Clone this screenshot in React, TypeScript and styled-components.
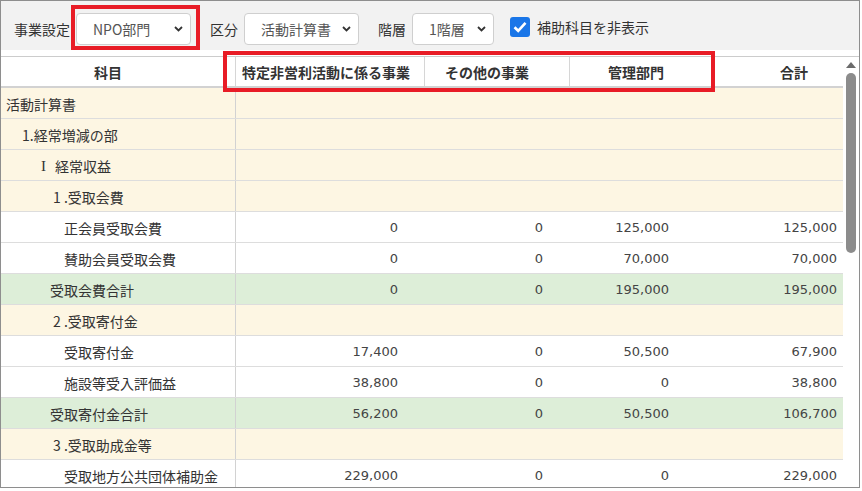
import styled, { createGlobalStyle } from "styled-components";

const GlobalStyle = createGlobalStyle`
  html, body {
    margin: 0;
    padding: 0;
    background: #ffffff;
  }
  body {
    font-family: "Noto Sans CJK JP", "Noto Sans", sans-serif;
    color: #333333;
  }
`;

type Kind = "group" | "item" | "total";

interface TRow {
  label: string;
  indent: number;
  kind: Kind;
  numeral?: string;
  values?: string[];
}

const rows: TRow[] = [
  { label: "活動計算書", indent: 5, kind: "group" },
  { label: "1.経常増減の部", indent: 21, kind: "group" },
  { label: "経常収益", numeral: "I", indent: 35, kind: "group" },
  { label: "1 .受取会費", indent: 52, kind: "group" },
  { label: "正会員受取会費", indent: 63, kind: "item", values: ["0", "0", "125,000", "125,000"] },
  { label: "賛助会員受取会費", indent: 63, kind: "item", values: ["0", "0", "70,000", "70,000"] },
  { label: "受取会費合計", indent: 49, kind: "total", values: ["0", "0", "195,000", "195,000"] },
  { label: "2 .受取寄付金", indent: 52, kind: "group" },
  { label: "受取寄付金", indent: 63, kind: "item", values: ["17,400", "0", "50,500", "67,900"] },
  { label: "施設等受入評価益", indent: 63, kind: "item", values: ["38,800", "0", "0", "38,800"] },
  { label: "受取寄付金合計", indent: 49, kind: "total", values: ["56,200", "0", "50,500", "106,700"] },
  { label: "3 .受取助成金等", indent: 52, kind: "group" },
  { label: "受取地方公共団体補助金", indent: 63, kind: "item", values: ["229,000", "0", "0", "229,000"] },
];

const headers = [
  { label: "科目", pl: 6, pr: 26 },
  { label: "特定非営利活動に係る事業", pl: 6, pr: 26 },
  { label: "その他の事業", pl: 6, pr: 26 },
  { label: "管理部門", pl: 6, pr: 16 },
  { label: "合計", pl: 38, pr: 6 },
];

const rowColors: Record<Kind, string> = {
  group: "#fdf6e3",
  item: "#ffffff",
  total: "#ddeed8",
};

function Chevron() {
  return (
    <svg width="9" height="6" viewBox="0 0 9 6">
      <path d="M1 1 L4.5 4.5 L8 1" fill="none" stroke="#333" strokeWidth="1.8" />
    </svg>
  );
}

function Select({ value, width }: { value: string; width: number }) {
  return (
    <SelectBox $width={width}>
      <span>{value}</span>
      <Chevron />
    </SelectBox>
  );
}

export default function App() {
  return (
    <>
      <GlobalStyle />
      <Frame>
        <Toolbar>
          <Field>
            <Label>事業設定</Label>
            <Select value="NPO部門" width={115} />
          </Field>
          <Field>
            <Label>区分</Label>
            <Select value="活動計算書" width={115} />
          </Field>
          <Field>
            <Label>階層</Label>
            <Select value="1階層" width={82} />
          </Field>
          <CheckField>
            <CheckBox>
              <svg width="14" height="12" viewBox="0 0 14 12">
                <path d="M1.5 6.2 L5.2 9.8 L12.5 1.8" fill="none" stroke="#fff" strokeWidth="2.6" />
              </svg>
            </CheckBox>
            <Label>補助科目を非表示</Label>
          </CheckField>
        </Toolbar>

        <TableArea>
          <Table>
            <HeaderRow>
              {headers.map((h) => (
                <HeaderCell key={h.label} $pl={h.pl} $pr={h.pr}>
                  {h.label}
                </HeaderCell>
              ))}
            </HeaderRow>
            {rows.map((r) => (
              <BodyRow key={r.label} $bg={rowColors[r.kind]}>
                <LabelCell $indent={r.indent}>
                  {r.numeral && <Numeral>{r.numeral}</Numeral>}
                  {r.label}
                </LabelCell>
                {[0, 1, 2, 3].map((i) => (
                  <NumCell key={i}>{r.values ? r.values[i] : ""}</NumCell>
                ))}
              </BodyRow>
            ))}
          </Table>
          <Scrollbar>
            <ArrowUp />
            <Thumb />
          </Scrollbar>
        </TableArea>

        <Highlight $left={70} $top={4} $width={129} $height={45} />
        <Highlight $left={222} $top={50} $width={492} $height={41} />
      </Frame>
    </>
  );
}

const Frame = styled.div`
  position: relative;
  width: 860px;
  height: 488px;
  box-sizing: border-box;
  border: 1px solid #8e8e8e;
  overflow: hidden;
  display: flex;
  flex-direction: column;
  background: #ffffff;
`;

const Toolbar = styled.div`
  height: 49px;
  flex: none;
  box-sizing: border-box;
  background: #f2f2f2;
  display: flex;
  align-items: center;
  gap: 19px;
  padding: 6px 0 0 13px;
  margin-bottom: 6px;
`;

const Field = styled.div`
  display: flex;
  align-items: center;
  gap: 6px;
`;

const Label = styled.span`
  font-size: 14px;
  line-height: 20px;
  color: #333333;
  white-space: nowrap;
`;

const SelectBox = styled.div<{ $width: number }>`
  width: ${({ $width }) => $width}px;
  height: 32px;
  box-sizing: border-box;
  background: #ffffff;
  border: 1px solid #cfcfcf;
  border-radius: 4px;
  display: flex;
  align-items: center;
  justify-content: space-between;
  padding: 0 7px 0 16px;
  font-size: 14px;
  color: #555555;
  white-space: nowrap;
`;

const CheckField = styled.div`
  display: flex;
  align-items: center;
  gap: 7px;
  margin-left: -3px;
  margin-bottom: 4px;
`;

const CheckBox = styled.span`
  width: 20px;
  height: 20px;
  border-radius: 3px;
  background: #1a76e8;
  display: flex;
  align-items: center;
  justify-content: center;
`;

const TableArea = styled.div`
  flex: 1;
  min-height: 0;
  display: flex;
  border-top: 1px solid #cccccc;
`;

const Table = styled.div`
  width: 842px;
  flex: none;
  display: flex;
  flex-direction: column;
`;

const HeaderRow = styled.div`
  display: grid;
  grid-template-columns: 235px 189px 145px 143px 130px;
  height: 31px;
  flex: none;
  box-sizing: border-box;
  border-bottom: 2px solid #d2d2d2;
  background: #ffffff;
`;

const HeaderCell = styled.div<{ $pl: number; $pr: number }>`
  box-sizing: border-box;
  padding: 0 ${({ $pr }) => $pr}px 0 ${({ $pl }) => $pl}px;
  border-right: 1px solid #d6d6d6;
  display: flex;
  align-items: center;
  justify-content: center;
  font-size: 14px;
  font-weight: bold;
  color: #333333;
  white-space: nowrap;
  overflow: hidden;

  &:nth-child(2) {
    justify-content: flex-start;
  }
  &:last-child {
    border-right: none;
  }
`;

const BodyRow = styled.div<{ $bg: string }>`
  display: grid;
  grid-template-columns: 235px 168px 145px 126px 168px;
  height: 31px;
  flex: none;
  box-sizing: border-box;
  border-bottom: 1px solid #dddddd;
  background: ${({ $bg }) => $bg};
`;

const LabelCell = styled.div<{ $indent: number }>`
  box-sizing: border-box;
  padding: 1px 0 0 ${({ $indent }) => $indent}px;
  border-right: 1px solid #d2d2d2;
  display: flex;
  align-items: center;
  font-size: 14px;
  color: #333333;
  white-space: nowrap;
`;

const Numeral = styled.span`
  display: inline-block;
  width: 15px;
  margin-right: 4px;
  text-align: center;
  font-family: "Liberation Serif", "Times New Roman", serif;
  font-size: 15px;
  line-height: 20px;
`;

const NumCell = styled.div`
  box-sizing: border-box;
  padding: 1px 6px 0 0;
  display: flex;
  align-items: center;
  justify-content: flex-end;
  font-family: "DejaVu Sans", Verdana, sans-serif;
  font-size: 13px;
  color: #444444;
`;

const Scrollbar = styled.div`
  flex: 1;
  display: flex;
  flex-direction: column;
  align-items: center;
  padding-top: 5px;
  background: #ffffff;
`;

const ArrowUp = styled.div`
  width: 0;
  height: 0;
  border-left: 5px solid transparent;
  border-right: 5px solid transparent;
  border-bottom: 6px solid #6b6b6b;
`;

const Thumb = styled.div`
  margin-top: 5px;
  width: 10px;
  height: 180px;
  border-radius: 5px;
  background: #8c8c8c;
`;

const Highlight = styled.div<{ $left: number; $top: number; $width: number; $height: number }>`
  position: absolute;
  left: ${({ $left }) => $left}px;
  top: ${({ $top }) => $top}px;
  width: ${({ $width }) => $width}px;
  height: ${({ $height }) => $height}px;
  box-sizing: border-box;
  border: 4px solid #e81c26;
  pointer-events: none;
`;
